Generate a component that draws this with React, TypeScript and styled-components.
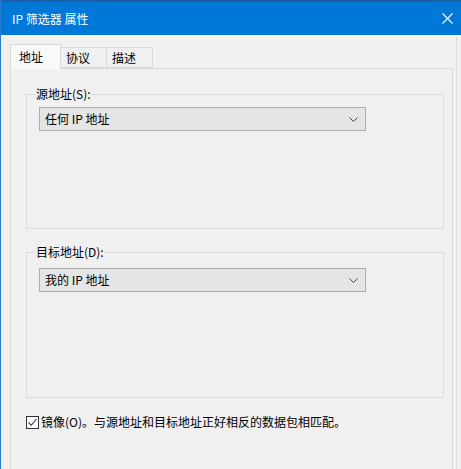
import React from "react";
import styled, { createGlobalStyle } from "styled-components";

const Global = createGlobalStyle`
  html, body { margin: 0; padding: 0; background: #f0f0f0; }
  body { font-family: "Noto Sans CJK SC", "Microsoft YaHei", sans-serif; font-size: 12px; color: #000; }
`;

const Window = styled.div`
  width: 461px;
  height: 469px;
  box-sizing: border-box;
  display: flex;
  flex-direction: column;
  border-left: 1px solid #2a7bd0;
  background: #f0f0f0;
  overflow: hidden;
`;

const TitleBar = styled.div`
  height: 35px;
  flex: none;
  box-sizing: border-box;
  display: flex;
  align-items: center;
  justify-content: space-between;
  padding: 0 8px 0 11px;
  background: #0078d7;
  border-top: 2px solid #1f5fa6;
  color: #fff;
  font-size: 12px;
`;

const TitleText = styled.span`
  line-height: 16px;
`;

const CloseButton = styled.div`
  width: 12px;
  height: 12px;
  display: flex;
  align-items: center;
  justify-content: center;
`;

const Seam = styled.div`
  height: 2px;
  flex: none;
  background: #fbf6ec;
`;

const Body = styled.div`
  flex: 1;
  display: flex;
  flex-direction: column;
  padding: 7px 3px 0 9px;
  margin-right: 4px;
  border-right: 1px solid #dcdcdc;
`;

const TabStrip = styled.div`
  display: flex;
  align-items: flex-end;
  height: 24px;
  position: relative;
  z-index: 1;
`;

const Tab = styled.div<{ $active?: boolean }>`
  box-sizing: border-box;
  height: ${(p) => (p.$active ? 25 : 21)}px;
  width: ${(p) => (p.$active ? 51 : 46)}px;
  margin-bottom: ${(p) => (p.$active ? -1 : 0)}px;
  padding-left: ${(p) => (p.$active ? 8 : 5)}px;
  display: flex;
  align-items: center;
  border: 1px solid #d9d9d9;
  border-bottom: ${(p) => (p.$active ? "none" : "1px solid #d9d9d9")};
  border-left: ${(p) => (p.$active ? "1px solid #d9d9d9" : "none")};
  background: ${(p) => (p.$active ? "#f9f9f9" : "#f0f0f0")};
  line-height: 16px;
`;

const TabPage = styled.div`
  flex: 1;
  display: flex;
  flex-direction: column;
  border: 1px solid #d9d9d9;
  border-bottom: none;
  padding: 17px 8px 0 15px;
`;

const Group = styled.fieldset<{ $h: number; $top: number }>`
  margin: 0;
  box-sizing: border-box;
  height: ${(p) => p.$h}px;
  border: 1px solid #dcdcdc;
  padding: ${(p) => p.$top}px 0 0 12px;
  min-width: 0;
`;

const GroupLabel = styled.legend`
  margin-left: -4px;
  padding: 0 1px;
  font-size: 12px;
  line-height: 16px;
`;

const Combo = styled.div`
  box-sizing: border-box;
  width: 327px;
  height: 24px;
  display: flex;
  align-items: center;
  justify-content: space-between;
  padding: 0 7px 0 5px;
  background: #e5e5e5;
  border: 1px solid #adadad;
  line-height: 16px;
`;

const Spacer = styled.div<{ $h: number }>`
  height: ${(p) => p.$h}px;
  flex: none;
`;

const CheckRow = styled.label`
  display: flex;
  align-items: center;
  gap: 2px;
  line-height: 16px;
`;

const Box = styled.span`
  width: 13px;
  height: 13px;
  box-sizing: border-box;
  border: 1px solid #333;
  background: #fff;
  display: flex;
  align-items: center;
  justify-content: center;
`;

const Chevron = () => (
  <svg width="9" height="5" viewBox="0 0 9 5">
    <polyline points="0.5,0.5 4.5,4.5 8.5,0.5" fill="none" stroke="#444" strokeWidth="1" />
  </svg>
);

export default function App() {
  return (
    <>
      <Global />
      <Window>
        <TitleBar>
          <TitleText>IP 筛选器 属性</TitleText>
          <CloseButton>
            <svg width="11" height="11" viewBox="0 0 11 11">
              <path d="M0.5 0.5 L10.5 10.5 M10.5 0.5 L0.5 10.5" stroke="#fff" strokeWidth="1.1" />
            </svg>
          </CloseButton>
        </TitleBar>
        <Seam />
        <Body>
          <TabStrip>
            <Tab $active>地址</Tab>
            <Tab>协议</Tab>
            <Tab>描述</Tab>
          </TabStrip>
          <TabPage>
            <Group $h={143} $top={5}>
              <GroupLabel>源地址(S):</GroupLabel>
              <Combo>
                <span>任何 IP 地址</span>
                <Chevron />
              </Combo>
            </Group>
            <Spacer $h={15} />
            <Group $h={154} $top={8}>
              <GroupLabel>目标地址(D):</GroupLabel>
              <Combo>
                <span>我的 IP 地址</span>
                <Chevron />
              </Combo>
            </Group>
            <Spacer $h={16} />
            <CheckRow>
              <Box>
                <svg width="11" height="11" viewBox="0 0 11 11">
                  <polyline points="1.5,5.5 4.2,8.3 9.5,2" fill="none" stroke="#333" strokeWidth="1.1" />
                </svg>
              </Box>
              <span>镜像(O)。与源地址和目标地址正好相反的数据包相匹配。</span>
            </CheckRow>
          </TabPage>
        </Body>
      </Window>
    </>
  );
}
